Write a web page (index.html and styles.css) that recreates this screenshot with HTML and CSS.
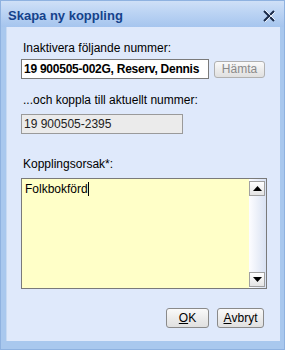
FILE: index.html
```html
<!DOCTYPE html>
<html>
<head>
<meta charset="utf-8">
<link rel="stylesheet" href="styles.css">
</head>
<body>
<div class="win">
  <div class="titlebar">
    <span class="title">Skapa ny koppling</span>
    <svg class="close" width="14" height="14" viewBox="0 0 14 14">
      <path d="M2 2 L12 12 M12 2 L2 12" stroke="#1a2a48" stroke-width="2" fill="none"/>
      <path d="M3 1 L13 11 M13 3 L3 13" stroke="#ffffff" stroke-width="1" fill="none" opacity="0.8"/>
    </svg>
  </div>
  <div class="body">
    <div class="label l1">Inaktivera följande nummer:</div>
    <div class="row">
      <div class="input bold">19 900505-002G, Reserv, Dennis</div>
      <div class="btn disabled">Hämta</div>
    </div>
    <div class="label l2">...och koppla till aktuellt nummer:</div>
    <div class="input gray">19 900505-2395</div>
    <div class="label l3">Kopplingsorsak*:</div>
    <div class="textarea">
      <div class="ta-text">Folkbokförd<span class="caret"></span></div>
      <div class="scroll">
        <div class="sbtn"><svg width="9" height="5" viewBox="0 0 9 5"><path d="M0 5 L4.5 0 L9 5 Z" fill="#000"/></svg></div>
        <div class="track"></div>
        <div class="sbtn"><svg width="9" height="5" viewBox="0 0 9 5"><path d="M0 0 L4.5 5 L9 0 Z" fill="#000"/></svg></div>
      </div>
    </div>
    <div class="actions">
      <div class="btn"><u>O</u>K</div>
      <div class="btn"><u>A</u>vbryt</div>
    </div>
  </div>
</div>
</body>
</html>
```
FILE: styles.css
```css
* { box-sizing: border-box; }
html, body { margin: 0; padding: 0; }
body { width: 285px; height: 350px; font-family: "Liberation Sans", Arial, sans-serif; font-size: 12px; color: #000; overflow: hidden; }
.win {
  width: 285px; height: 350px;
  background: #a9c8ee;
  border: 1px solid #8fb2e0;
  display: flex; flex-direction: column;
  padding: 0 4px 8px 5px;
}
.titlebar {
  height: 26px;
  margin: 0 -4px 0 -5px;
  padding: 0 8px 0 7px;
  background: linear-gradient(#cfe0f7, #b9d2f3 50%, #a6c5ee);
  display: flex; align-items: center; justify-content: space-between;
}
.title { font-weight: bold; color: #15428b; font-size: 13px; padding-top: 2px; }
.close { margin-top: 3px; }
.body {
  flex: 1;
  background: #dfe9fb;
  border-left: 1px solid #c8daf2;
  padding: 14px 0 0 14px;
  display: flex; flex-direction: column;
}
.label { color: #000; line-height: 14px; padding-left: 2px; }
.l1 { margin-bottom: 4px; }
.row { display: flex; align-items: center; gap: 5px; }
.input {
  height: 20px; border: 1px solid #7a7a7a; background: #fff;
  line-height: 18px; padding-left: 2px; white-space: nowrap; overflow: hidden;
}
.input.bold { width: 188px; font-weight: bold; font-size: 12px; letter-spacing: -0.25px; }
.input.gray { width: 162px; background: #ebebeb; color: #222; border-color: #9a9a9a; }
.l2 { margin-top: 14px; margin-bottom: 7px; }
.l3 { margin-top: 23px; margin-bottom: 7px; }
.btn {
  height: 19px; border: 1px solid #8a8a8a; border-radius: 3px;
  background: linear-gradient(#fafafa, #ececec 50%, #e0e0e0);
  display: flex; align-items: center; justify-content: center;
  color: #000;
}
.btn.disabled { width: 51px; height: 17px; color: #8a8a8a; border-color: #b0b0b0; }
.textarea {
  width: 246px; height: 111px;
  border: 1px solid #7a7a7a; background: #ffffc8;
  display: flex;
}
.ta-text { flex: 1; padding: 3px 3px; }
.caret { display: inline-block; width: 1px; height: 14px; background: #000; vertical-align: -3px; }
.scroll {
  width: 17px; display: flex; flex-direction: column;
  background: linear-gradient(90deg, #fdfdff, #d9e2f3);
  padding: 2px 1px 1px 0;
}
.sbtn {
  height: 15px; border: 1px solid #a0a0a0; background: linear-gradient(#fff, #e4e4e4);
  display: flex; align-items: center; justify-content: center;
}
.track { flex: 1; }
.actions {
  margin-top: auto; margin-bottom: 13px; margin-right: 16px;
  display: flex; justify-content: flex-end; gap: 8px;
}
.actions .btn { height: 20px; }
.actions .btn:first-child { width: 43px; }
.actions .btn:last-child { width: 47px; }
```
